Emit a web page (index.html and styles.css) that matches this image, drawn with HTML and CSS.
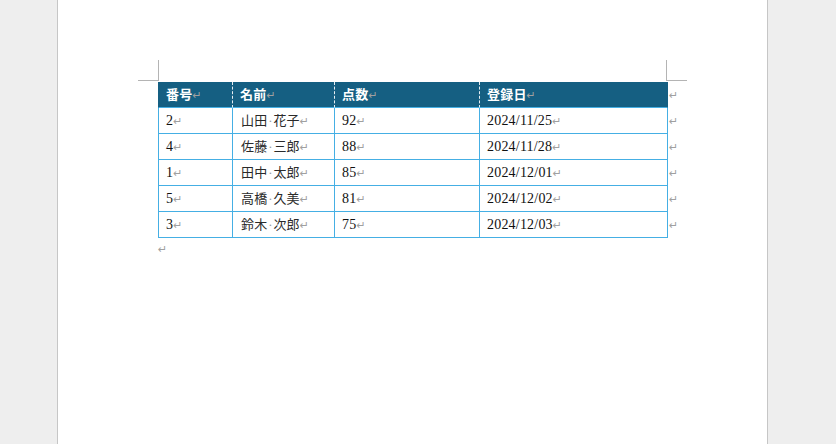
FILE: index.html
```html
<!DOCTYPE html>
<html lang="ja">
<head>
<meta charset="utf-8">
<link rel="stylesheet" href="styles.css">
</head>
<body>
<div class="page">
  <div class="corners">
    <div class="corner corner-left"></div>
    <div class="corner corner-right"></div>
  </div>
  <table class="grid">
    <colgroup>
      <col class="c1"><col class="c2"><col class="c3"><col class="c4"><col class="c5">
    </colgroup>
    <thead>
      <tr>
        <th>番号<span class="rm">↵</span></th>
        <th>名前<span class="rm">↵</span></th>
        <th>点数<span class="rm">↵</span></th>
        <th>登録日<span class="rm">↵</span></th>
        <td class="eor"><span class="rm">↵</span></td>
      </tr>
    </thead>
    <tbody>
      <tr>
        <td>2<span class="rm">↵</span></td>
        <td class="ja">山田<span class="sp">·</span>花子<span class="rm">↵</span></td>
        <td>92<span class="rm">↵</span></td>
        <td>2024/11/25<span class="rm">↵</span></td>
        <td class="eor"><span class="rm">↵</span></td>
      </tr>
      <tr>
        <td>4<span class="rm">↵</span></td>
        <td class="ja">佐藤<span class="sp">·</span>三郎<span class="rm">↵</span></td>
        <td>88<span class="rm">↵</span></td>
        <td>2024/11/28<span class="rm">↵</span></td>
        <td class="eor"><span class="rm">↵</span></td>
      </tr>
      <tr>
        <td>1<span class="rm">↵</span></td>
        <td class="ja">田中<span class="sp">·</span>太郎<span class="rm">↵</span></td>
        <td>85<span class="rm">↵</span></td>
        <td>2024/12/01<span class="rm">↵</span></td>
        <td class="eor"><span class="rm">↵</span></td>
      </tr>
      <tr>
        <td>5<span class="rm">↵</span></td>
        <td class="ja">高橋<span class="sp">·</span>久美<span class="rm">↵</span></td>
        <td>81<span class="rm">↵</span></td>
        <td>2024/12/02<span class="rm">↵</span></td>
        <td class="eor"><span class="rm">↵</span></td>
      </tr>
      <tr>
        <td>3<span class="rm">↵</span></td>
        <td class="ja">鈴木<span class="sp">·</span>次郎<span class="rm">↵</span></td>
        <td>75<span class="rm">↵</span></td>
        <td>2024/12/03<span class="rm">↵</span></td>
        <td class="eor"><span class="rm">↵</span></td>
      </tr>
    </tbody>
  </table>
  <p class="para"><span class="rm">↵</span></p>
</div>
</body>
</html>
```
FILE: styles.css
```css
html, body {
  margin: 0;
  padding: 0;
  height: 100%;
}
body {
  background: #eeeeee;
  font-family: "Liberation Serif", "Noto Sans CJK JP", serif;
  overflow: hidden;
}
.page {
  box-sizing: border-box;
  margin-left: 57px;
  width: 711px;
  min-height: 100vh;
  background: #ffffff;
  border-left: 1px solid #c6c6c6;
  border-right: 1px solid #c6c6c6;
  padding-top: 60px;
}
.corners {
  display: flex;
  justify-content: space-between;
  padding: 0 80px;
  height: 21px;
}
.corner {
  width: 21px;
  height: 21px;
  box-sizing: border-box;
  border-bottom: 1px solid #b4b4b4;
}
.corner-left { border-right: 1px solid #b4b4b4; }
.corner-right { border-left: 1px solid #b4b4b4; }

.grid {
  margin-top: 1px;
  margin-left: 100px;
  border-collapse: separate;
  border-spacing: 0;
  table-layout: fixed;
  width: 530px;
  font-size: 14px;
  letter-spacing: 0.2px;
  color: #111;
}
.c1 { width: 75px; }
.c2 { width: 102px; }
.c3 { width: 145px; }
.c4 { width: 188px; }
.c5 { width: 20px; }

.grid th, .grid td {
  box-sizing: border-box;
  height: 26px;
  padding: 1px 0 0 7px;
  text-align: left;
  vertical-align: middle;
  white-space: nowrap;
  border-right: 1px solid #45afe4;
  border-bottom: 1px solid #45afe4;
  line-height: 16px;
}
.grid tr > :first-child {
  border-left: 1px solid #45afe4;
}
.grid td.ja {
  font-size: 13px;
  color: #2a2a2a;
  padding-left: 8px;
}
.grid th {
  background: #155f82;
  color: #ffffff;
  font-weight: bold;
  font-size: 13px;
  border-right: 1px dashed #e6eef2;
}
.grid thead tr > :first-child {
  border-left: 1px solid #155f82;
}
.grid th:nth-child(4) {
  border-right: 1px solid #155f82;
}
.grid .eor {
  border: none;
  background: transparent;
  padding-left: 1px;
}
.rm {
  font-family: "DejaVu Sans", sans-serif;
  font-size: 11px;
  font-weight: normal;
  color: #a0a0a0;
  letter-spacing: 0;
}
.sp {
  display: inline-block;
  width: 6px;
  text-align: center;
  color: #9a9a9a;
  letter-spacing: 0;
}
.para {
  margin: 2px 0 0 100px;
  height: 16px;
  line-height: 16px;
}
```
